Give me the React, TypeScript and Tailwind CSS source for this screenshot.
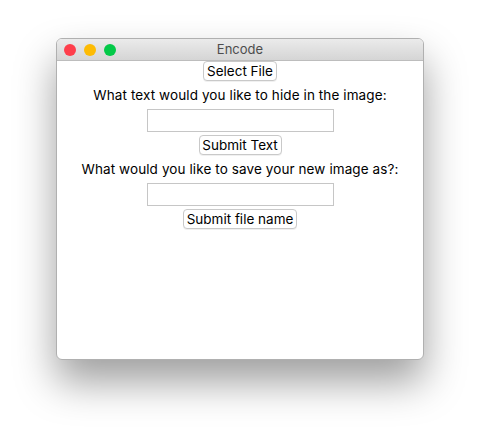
import React from "react";

const font = { fontFamily: 'Inter, "Liberation Sans", Arial, sans-serif' };

function Btn({ children, w }: { children: React.ReactNode; w: string }) {
  return (
    <button
      className={`flex items-center justify-center h-[20px] rounded-[4px] border border-[#c9c9c9] bg-white text-[13.5px] leading-[18px] text-black shadow-[0_1px_0_rgba(0,0,0,0.06)] ${w}`}
    >
      {children}
    </button>
  );
}

export default function App() {
  return (
    <div className="w-[480px] h-[434px] bg-white pt-[38px] pl-[56px]" style={font}>
      <div className="w-[368px] h-[322px] rounded-[6px] bg-white border border-[#b0b0b0] shadow-[0_22px_40px_rgba(0,0,0,0.38)] overflow-hidden flex flex-col">
        <div className="relative h-[22px] shrink-0 bg-gradient-to-b from-[#ebebeb] to-[#d5d5d5] border-b border-[#bdbdbd] flex items-center">
          <div className="flex items-center gap-[8px] pl-[7px]">
            <span className="w-[12px] h-[12px] rounded-full bg-[#fe3e4b]" />
            <span className="w-[12px] h-[12px] rounded-full bg-[#fdbb03]" />
            <span className="w-[12px] h-[12px] rounded-full bg-[#03c948]" />
          </div>
          <div className="absolute inset-0 flex items-center justify-center text-[13px] text-[#4d4d4d]">
            Encode
          </div>
        </div>
        <div className="flex flex-col items-center">
          <Btn w="w-[74px]">Select File</Btn>
          <div className="h-[28px] flex items-center text-[13.5px] text-black tracking-[0.1px]">
            What text would you like to hide in the image:
          </div>
          <input className="w-[187px] h-[23px] border border-[#c6c6c6] bg-white outline-none" />
          <div className="mt-[3px] flex">
            <Btn w="w-[83px]">Submit Text</Btn>
          </div>
          <div className="h-[28px] flex items-center text-[13.5px] text-black tracking-[0.1px]">
            What would you like to save your new image as?:
          </div>
          <input className="w-[187px] h-[23px] border border-[#c6c6c6] bg-white outline-none" />
          <div className="mt-[3px] flex">
            <Btn w="w-[114px]">Submit file name</Btn>
          </div>
        </div>
      </div>
    </div>
  );
}
